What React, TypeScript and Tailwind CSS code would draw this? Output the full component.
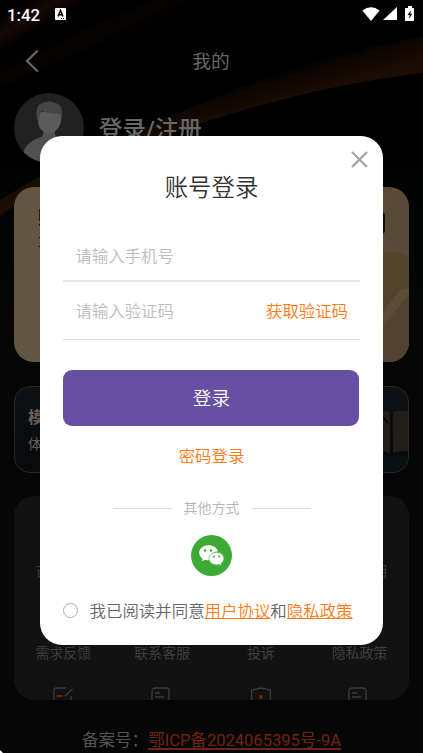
import React from "react";

const labelsTop = ["吉利好运", "学习记录", "课程", "清空应用"];
const labels = ["需求反馈", "联系客服", "投诉", "隐私政策"];

function Background() {
  return (
    <svg className="absolute inset-0 h-full w-full" viewBox="0 0 423 753" preserveAspectRatio="none">
      <defs>
        <linearGradient id="base" x1="0" y1="0" x2="0" y2="1">
          <stop offset="0" stopColor="#000" />
          <stop offset="0.2" stopColor="#000" />
          <stop offset="0.27" stopColor="#020404" />
          <stop offset="0.5" stopColor="#060606" />
          <stop offset="1" stopColor="#060606" />
        </linearGradient>
        <linearGradient id="arc" gradientUnits="userSpaceOnUse" x1="302" y1="60" x2="312" y2="93">
          <stop offset="0" stopColor="#1c0d02" stopOpacity="0" />
          <stop offset="1" stopColor="#1c0d02" />
        </linearGradient>
        <linearGradient id="beam" gradientUnits="userSpaceOnUse" x1="38" y1="-10" x2="58" y2="24">
          <stop offset="0" stopColor="#0c0400" stopOpacity="0" />
          <stop offset="0.5" stopColor="#150906" />
          <stop offset="1" stopColor="#0c0400" stopOpacity="0" />
        </linearGradient>
        <linearGradient id="haze" gradientUnits="userSpaceOnUse" x1="85" y1="20" x2="100" y2="52">
          <stop offset="0" stopColor="#070300" stopOpacity="0" />
          <stop offset="0.5" stopColor="#070300" />
          <stop offset="1" stopColor="#070300" stopOpacity="0" />
        </linearGradient>
      </defs>
      <rect width="423" height="753" fill="url(#base)" />
      <path d="M0 14 L60 -20 L120 -20 L0 50Z" fill="url(#beam)" />
      <path d="M0 90 Q110 35 240 0 L150 0 Q80 30 0 60Z" fill="url(#haze)" />
      <path d="M423 73 Q325 84 211 120 Q90 158 0 215 L0 200 Q90 145 200 104 Q300 60 423 36Z" fill="url(#arc)" />
    </svg>
  );
}

function StatusBar() {
  return (
    <div className="flex h-7 shrink-0 items-center pt-[2px] pl-[7px] pr-[8px] text-white">
      <span className="w-12 font-['Roboto',sans-serif] text-[16.8px] font-medium leading-none">1:42</span>
      <svg className="-mt-[2px] h-3 w-[11px]" viewBox="0 0 11 12">
        <rect width="11" height="12" rx="1" fill="#fff" />
        <path d="M3 8.5 5.500 2.500 8 8.500M4 6.700h3" fill="none" stroke="#000" strokeWidth="1.500" />
        <path d="M6 10.500h1M8 10.500h1" stroke="#000" strokeWidth="1" />
      </svg>
      <div className="ml-auto flex items-center pb-[3px]">
        <svg className="h-[14px] w-[18px]" viewBox="0 0 18 14"><path d="M.4 3.600Q9-3.200 17.600 3.600L9 14Z" fill="#fff" /></svg>
        <svg className="ml-[3px] h-[13px] w-[14px]" viewBox="0 0 14 13"><path d="M14 0V13H0Z" fill="#fff" /></svg>
        <svg className="ml-[8px] h-[15px] w-[10px]" viewBox="0 0 10 15">
          <path d="M3 0h4v2h1.300q.7 0 .7.7V14.300q0 .7-.7.7H.7Q0 15 0 14.300V2.700Q0 2 .7 2H3Z" fill="#fff" />
          <path d="M6 4.200 2.500 9h2L4 13 7.200 7.700H5.200Z" fill="#000" />
        </svg>
      </div>
    </div>
  );
}

function Avatar() {
  return (
    <svg className="h-[70px] w-[70px] shrink-0" viewBox="0 0 70 70">
      <defs><clipPath id="avatar"><circle cx="35" cy="35" r="35" /></clipPath></defs>
      <g clipPath="url(#avatar)">
        <rect width="70" height="70" fill="#212121" />
        <path d="M8 65Q10 49 26 44.500Q30 43 29.500 36H41Q40 43 44 44.500Q60 49 62 65V70H8Z" fill="#515151" />
        <path d="M24 19H47V28Q46 35 40 39Q35 42 30 39Q24 35 24 28Z" fill="#5b5b5b" />
        <path d="M23 27Q21 14 26 11Q35 6 44 11Q50 15 47.500 27L46 21Q33 21 28 18Q24.500 21 25 27Z" fill="#464646" />
      </g>
    </svg>
  );
}

function NoteIcon() {
  return (
    <svg className="h-5 w-[20px]" viewBox="0 0 20 20" fill="none" stroke="#3b3b3b" strokeWidth="1.300">
      <rect x="1" y="1" width="17" height="19" rx="3" /><path d="M4 6h5M4 10h9" />
    </svg>
  );
}
function EditIcon() {
  return (
    <svg className="h-5 w-[20px]" viewBox="0 0 20 20" fill="none" stroke="#3b3b3b" strokeWidth="1.300">
      <path d="M13 1H3Q1 1 1 3V20M19.500 2 12 9M18 9V20" /><path d="M3.500 9h6" stroke="#6b200d" strokeWidth="2" />
    </svg>
  );
}
function ShieldIcon() {
  return (
    <svg className="h-5 w-[20px]" viewBox="0 0 20 20" fill="none" stroke="#3b3b3b" strokeWidth="1.300">
      <path d="M.7 20V3L10 1 19.300 3V20" /><circle cx="10" cy="10" r="2" fill="#7a260c" stroke="none" />
    </svg>
  );
}

function Account() {
  return (
    <div className="flex min-h-0 flex-1 flex-col">
      <header className="flex h-[65px] shrink-0 items-center justify-center pl-[25px] pr-[25px] text-[#686868]">
        <svg className="h-6 w-[14px]" viewBox="0 0 14 24"><path d="M12.800 1.500 2 12 12.800 22.500" fill="none" stroke="#686868" strokeWidth="2.200" /></svg>
        <h1 className="flex-1 pr-[15px] pt-[3px] text-center text-[18.700px] leading-none">我的</h1>
      </header>
      <div className="flex h-[94px] shrink-0 items-start px-[14px]">
        <Avatar />
        <span className="ml-[15px] mt-[25px] text-[23.400px] font-medium leading-[24px] text-[#686868]">登录/注册</span>
      </div>
      <section className="relative mx-[14px] flex h-[175px] shrink-0 justify-between overflow-hidden rounded-[20px] bg-gradient-to-r from-[#625642] to-[#594a38] px-6 pt-5">
        <svg className="absolute inset-0 h-full w-full" viewBox="0 0 395 175">
          <path d="M330 65H382Q390 65 395 72V175H330Z" fill="#53442b" />
          <path d="M355 135 380 105Q388 97 395 101V175H330Z" fill="#524330" />
          <path d="M350 148 382 108Q387 100 395 102V107L366 143 350 158Z" fill="#5b4c38" />
        </svg>
        <div className="relative flex flex-col text-[#0b0b0b]">
          <strong className="text-[18.700px] leading-[23px]">购买</strong>
          <span className="mt-[3px] text-[14px] leading-[20px]">享受</span>
        </div>
        <div className="relative mt-[5px] h-[22px] w-[80px] rounded-[4px] bg-[#0c0f10]" />
      </section>
      <section className="mx-[14px] mt-6 flex h-[87px] shrink-0 justify-between overflow-hidden rounded-[16px] border border-[#292923] bg-gradient-to-b from-[#0d1214] to-[#080a0b] pl-[13px]">
        <div className="pt-[19px] text-[#685d57]">
          <div className="text-[16.400px] font-bold leading-[23px]">模拟</div>
          <div className="mt-[5px] text-[14px] leading-[20px]">体验</div>
        </div>
        <svg className="h-[85px] w-[60px]" viewBox="0 0 60 85">
          <path d="M24 24H38Q42 24 42 28V66H24Z" fill="#221e19" />
          <path d="M45 28Q45 24 49 24H60V66H45Z" fill="#211d18" />
          <path d="M34 29 40 36M43 25V69M28 65Q38 65 43 68Q48 65 60 65" stroke="#080a0b" strokeWidth="2" fill="none" />
          <path d="M24 69H60V85H24Z" fill="#0b1012" />
        </svg>
      </section>
      <section className="mx-[14px] mt-[23px] h-[204px] shrink-0 overflow-hidden rounded-[20px] bg-[#121212] text-[14px] leading-[20px] text-[#3f3f3f]">
        <div className="grid grid-cols-4 pt-[65px] text-center">{labelsTop.map((x) => <span key={x}>{x}</span>)}</div>
        <div className="grid grid-cols-4 pt-[62px] text-center">{labels.map((x) => <span key={x}>{x}</span>)}</div>
        <div className="grid grid-cols-4 justify-items-center pt-[24px]">
          <EditIcon /><div className="pr-[2px]"><NoteIcon /></div><ShieldIcon /><div className="pr-[3px]"><NoteIcon /></div>
        </div>
      </section>
      <footer className="mt-[30px] text-center text-[16.550px] leading-[22px] text-[#555]">
        备案号：<a className="text-[#71240f] underline decoration-2 underline-offset-[2px]">鄂ICP备2024065395号-9A</a>
      </footer>
    </div>
  );
}

function WechatIcon() {
  return (
    <svg className="h-[41px] w-[41px]" viewBox="0 0 41 41">
      <circle cx="20.500" cy="20.500" r="20.500" fill="#3caa35" />
      <path d="M17.500 10.300c-5.300 0-9.300 3.300-9.300 7.500 0 2.400 1.300 4.500 3.400 5.900l-.8 2.600 3.200-1.600c1.600.5 3 .7 4.700.5-.9-5.100 3.200-8.700 8.300-8.600-.8-3.700-4.800-6.300-9.500-6.300Z" fill="#fff" />
      <path d="M25.500 17.300c-4.300 0-7.500 2.800-7.500 6.300s3.200 6.300 7.500 6.300c1 0 1.900-.1 2.700-.4l2.400 1.300-.6-2.200c1.800-1.200 2.900-3 2.900-5 0-3.500-3.200-6.300-7.400-6.300Z" fill="#fff" stroke="#3caa35" strokeWidth=".6" />
      <g fill="#3caa35"><circle cx="14" cy="15.500" r="1.200" /><circle cx="20" cy="15.500" r="1.200" /><circle cx="23" cy="21.500" r="1" /><circle cx="28" cy="21.500" r="1" /></g>
    </svg>
  );
}

function LoginDialog() {
  return (
    <div role="dialog" className="absolute left-[40px] top-[136px] flex h-[509px] w-[343px] flex-col rounded-[22px] bg-white px-[23px] font-[350]">
      <button className="absolute right-[15px] top-[15px]" aria-label="关闭">
        <svg className="h-[17px] w-[17px]" viewBox="0 0 17 17"><path d="M1 1 16 16M16 1 1 16" stroke="#a5a5a5" strokeWidth="2.300" /></svg>
      </button>
      <h2 className="mt-[35px] text-center text-[23.400px] leading-[34px] text-[#333]">账号登录</h2>
      <div className="mt-[25px] flex h-[52px] items-center border-b-2 border-[#e8e8e8] pl-[12.500px] pt-[4px] text-[16.400px] text-[#bcbcbc]">请输入手机号</div>
      <div className="flex h-[58px] items-center justify-between border-b border-[#dcdcdc] pl-[12.500px] pr-[12px] pt-[3px] text-[16.400px] text-[#bcbcbc]">
        <span>请输入验证码</span><span className="text-[#ff7a14]">获取验证码</span>
      </div>
      <button className="ml-[0.400px] mt-[30px] h-14 w-[296px] rounded-[9px] bg-[#674fa3] pt-[2px] text-[18.700px] text-white">登录</button>
      <a className="mt-[19px] text-center text-[16.400px] leading-[24px] text-[#ff7a14]">密码登录</a>
      <div className="mt-[29px] flex items-center justify-center gap-[12px] text-[14px] leading-[20px] text-[#b5b5b5]">
        <i className="h-px w-[59px] bg-[#dcdcdc]" /><span>其他方式</span><i className="h-px w-[59px] bg-[#dcdcdc]" />
      </div>
      <div className="mt-[17px] flex justify-center"><WechatIcon /></div>
      <div className="mt-[23px] flex items-center whitespace-nowrap text-[16.450px] leading-[24px] text-[#666]">
        <span className="relative -top-px mr-[11.500px] h-[15px] w-[15px] shrink-0 rounded-full border border-[#aaa]" />
        <span className="pt-px">我已阅读并同意<a className="text-[#ff7a14] underline decoration-1 underline-offset-[1px]">用户协议</a>和<a className="text-[#ff7a14] underline decoration-1 underline-offset-[1px]">隐私政策</a></span>
      </div>
    </div>
  );
}

export default function App() {
  return (
    <main className="relative h-[753px] w-[423px] overflow-hidden bg-black font-['Roboto','Noto_Sans_CJK_SC',sans-serif]">
      <Background />
      <div className="relative flex h-full flex-col">
        <StatusBar />
        <Account />
      </div>
      <LoginDialog />
      <svg className="absolute bottom-0 left-0 h-[3px] w-[3px]" viewBox="0 0 3 3"><path d="M0 0 3 3H0Z" fill="#fff" /></svg>
    </main>
  );
}
